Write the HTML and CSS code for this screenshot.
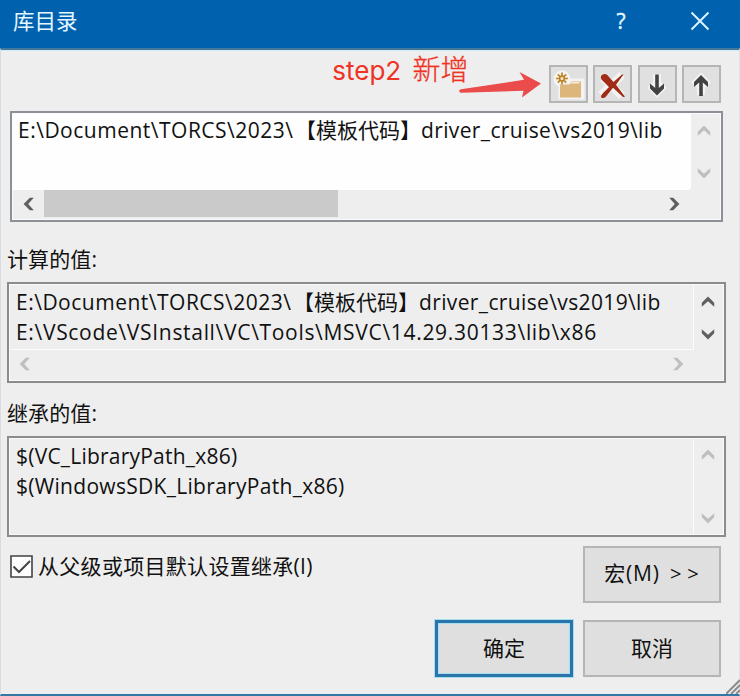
FILE: index.html
```html
<!DOCTYPE html>
<html lang="zh-CN">
<head>
<meta charset="utf-8">
<title>库目录</title>
<link rel="stylesheet" href="styles.css">
</head>
<body>
<svg width="0" height="0" class="defs">
  <symbol id="chev" viewBox="0 0 14 12"><path d="M.8 7.800 7 1.600l6.200 6.200v4L7 6.200.8 11.800z"/></symbol>
</svg>
<div class="dialog">
  <header class="titlebar">
    <h1>库目录</h1>
    <span class="help">?</span>
    <svg class="close" width="20" height="20" viewBox="0 0 20 20"><path d="M1.500 1.500l17 17M18.500 1.500l-17 17"/></svg>
  </header>
  <main class="body">
    <div class="toolbar">
      <span class="note">step2 <span>新增</span></span>
      <svg class="arrow" width="84" height="27" viewBox="0 0 84 27"><path d="M3 17.200 66 7.800 61.500 0 83 11.500 64 25.500 65.500 18.800 4 20.800C.5 21 .5 17.500 3 17.200z"/></svg>
      <button class="tool"><svg width="35" height="33" viewBox="0 0 35 33">
        <path class="halo" d="M9 15h9l2-3h12v18H9z"/><circle class="halo" cx="11" cy="11" r="7"/>
        <path fill="#dcb67a" d="M9 16.500h9.500l2-3H30V29.500H9z"/><path d="M20 14.800h8.500" stroke="#f7ead4" stroke-width="1.500"/>
        <g stroke="#bf8428" stroke-width="1.700"><path d="M11 4.500v12M5 10.500h12M6.800 6.300l8.400 8.400M15.200 6.300l-8.400 8.400"/><circle cx="11" cy="10.500" r="2.400" fill="#f8ead2"/></g>
      </svg></button>
      <button class="tool"><svg width="35" height="33" viewBox="0 0 35 33">
        <path class="halo thick" d="M8 10 27 28M27 7 6 27"/>
        <path fill="#a02b16" d="M7 7c3-2 5-1 7 2l4.500 5L27 6.500h1.500L21 16.800l9 12-2 .2-10-9.200-7 8.700c-2 2-5 2-5 0s5-6 8-9.500L6.500 11.500c-1-2-.8-3.500.5-4.500z"/>
      </svg></button>
      <button class="tool"><svg width="35" height="33" viewBox="0 0 35 33">
        <path class="halo thick" d="M17 6v19M10 17l7 7 7-7"/><path fill="#424242" d="M15.200 6.500h3.600V20l5.200-4.500v5L17 27.500l-7-7v-5l5.200 4.500z"/>
      </svg></button>
      <button class="tool"><svg width="35" height="33" viewBox="0 0 35 33">
        <path class="halo thick" d="M17 27V9M10 17l7-7 7 7"/><path fill="#424242" d="M15.200 28h3.600V14.500L24 19v-5L17 7l-7 7v5l5.200-4.500z"/>
      </svg></button>
    </div>

    <section class="list edit">
      <div class="text"><p><span class="p1">E:\Document\TORCS\2023\</span><span class="p2">【模板代码】</span><span class="p3">driver_cruise\vs2019\lib</span></p></div>
      <div class="vbar off"><svg class="up"><use href="#chev"/></svg><svg class="down"><use href="#chev"/></svg></div>
      <div class="hbar"><svg class="left"><use href="#chev"/></svg><i class="thumb"></i><svg class="right"><use href="#chev"/></svg></div>
      <div class="corner"></div>
    </section>

    <h2>计算的值:</h2>
    <section class="list computed">
      <div class="text"><p><span class="p1">E:\Document\TORCS\2023\</span><span class="p2">【模板代码】</span><span class="p3">driver_cruise\vs2019\lib</span></p><p class="l2">E:\VScode\VSInstall\VC\Tools\MSVC\14.29.30133\lib\x86</p></div>
      <div class="vbar"><svg class="up"><use href="#chev"/></svg><svg class="down"><use href="#chev"/></svg></div>
      <div class="hbar off"><svg class="left"><use href="#chev"/></svg><svg class="right"><use href="#chev"/></svg></div>
      <div class="corner"></div>
    </section>

    <h2 class="second">继承的值:</h2>
    <section class="list inherited">
      <div class="text"><p class="l3">$(VC_LibraryPath_x86)</p><p class="l4">$(WindowsSDK_LibraryPath_x86)</p></div>
      <div class="vbar off"><svg class="up"><use href="#chev"/></svg><svg class="down"><use href="#chev"/></svg></div>
    </section>

    <div class="options">
      <label class="check"><svg width="23" height="23" viewBox="0 0 23 23"><path fill="#fdfdfd" stroke="#414141" stroke-width="1.600" d="M1 1h21v21H1z"/><path fill="none" stroke="#444" stroke-width="2" d="M3.500 11.500 9 17 20 6"/></svg><span>从父级或项目默认设置继承(I)</span></label>
      <button class="btn macro">宏(M) <span>&gt;&gt;</span></button>
    </div>
    <footer class="actions">
      <button class="btn ok">确定</button>
      <button class="btn">取消</button>
    </footer>
    <svg class="grip" width="14" height="15" viewBox="0 0 14 15"><path d="M0 15 14 1M5 15l9-9M10 15l4-4"/></svg>
  </main>
</div>
</body>
</html>
```
FILE: styles.css
```css
* { box-sizing: border-box; }
body { margin: 0; }
body, button { font: 21px/30px "Open Sans", "Noto Sans CJK SC", sans-serif; color: #111; }
h1, h2, p { margin: 0; font-weight: 400; }
svg { display: block; flex: none; }
.defs { position: absolute; }
.dialog { width: 740px; height: 696px; display: flex; flex-direction: column; background: #eee; }
.titlebar { height: 48px; background: #0062af; display: flex; align-items: center; color: #e4f6ff; padding: 0 30px 6px 13px; }
h1 { flex: 1; font-size: 21.500px; line-height: 30px; }
.help { width: 20px; margin-right: 59px; text-align: center; -webkit-text-stroke: .4px; }
.close { fill: none; stroke: #d9f3ff; stroke-width: 2; }
.body { position: relative; flex: 1; border: solid; border-width: 2px 1px 2px; border-color: #43789a #e1e1e6 #3478a5 #d8dce4; box-shadow: inset 0 1px #d3edf6; padding: 0 18px 0 6px; }
.toolbar { display: flex; gap: 5.300px; height: 61px; padding-top: 15px; justify-content: flex-end; }
.note { font: 26px/30px Inter, "Noto Sans CJK SC", sans-serif; color: #ee3325; margin: -10px -16px 0 0; white-space: nowrap; }
.note span { font-size: 28px; margin-left: 4px; font-weight: 300; -webkit-text-stroke: .3px; }
.arrow { fill: #ea4b4b; margin: 7px 2px 0 0; }
.tool { width: 39px; height: 38px; padding: 0; border: 2px solid #b5b5b5; background: #e0e0e0; }
.halo { fill: #f3f3f3; stroke: #f3f3f3; stroke-width: 3; }
.halo.thick { fill: none; stroke-width: 8; }
.list { display: grid; width: 719px; border: 2px solid #8b8b8b; box-shadow: inset 0 0 0 1px #fafafa; padding: 1px; }
.text { white-space: nowrap; overflow: hidden; padding: 2px 0 0 6px; }
.text p { height: 30px; }
.text span { display: inline-block; }
.p1 { width: 277px; letter-spacing: .5px; }
.p3 { letter-spacing: .37px; }
.l2 { letter-spacing: .69px; }
.l3 { letter-spacing: .22px; }
.l4 { letter-spacing: .3px; }
.edit { width: 713px; height: 111px; margin-left: 3px; border-color: #8c9097; grid-template: 76px 29px / 678px 29px; }
.edit .text { background: #fefefe; padding: 1px 0 0 5px; border-radius: 0 0 3px; }
.computed { height: 101px; grid-template: 65px 30px / 684px 29px; }
.inherited { height: 101px; grid-template: 95px / 684px 29px; }
.computed .text, .inherited .text { border-right: 1px solid #fcfcfc; }
.computed .text { border-bottom: 1px solid #fcfcfc; }
.vbar { display: flex; flex-direction: column; justify-content: space-between; align-items: center; padding: 10px 3px 10px 0; }
.computed .vbar { padding: 10px 2px 9px 0; }
.inherited .vbar { padding: 9px 2px 9px 0; }
.hbar { display: flex; justify-content: space-between; align-items: center; padding: 0 9px 2px 8px; }
.computed .hbar { padding: 0 8px 2px 7px; }
.hbar .thumb { width: 294px; height: 27px; margin-left: 9px; margin-right: auto; background: #cacaca; }
.list svg { width: 14px; height: 12px; fill: #606060; }
.off svg { fill: #bfbfbf !important; }
.down { transform: rotate(180deg); }
.left { transform: rotate(-90deg); }
.right { transform: rotate(90deg); }
h2 { font-size: 21px; line-height: 30px; margin: 22px 0 8px; letter-spacing: .1px; }
h2.second { margin: 15px 0 8px; }
.options { display: flex; justify-content: space-between; margin: 9px 0 0 3px; }
.check { display: flex; gap: 5px; height: 31px; padding-top: 9px; white-space: nowrap; }
.check span { margin-top: -4px; letter-spacing: .3px; }
.btn { width: 138px; height: 57px; border: 2px solid #b5b5b5; background: #dfdfdf; padding: 0 0 2px; }
.macro { letter-spacing: .8px; }
.btn span { letter-spacing: 6px; font-size: 20px; margin: 0 -5px 0 4px; }
.actions { display: flex; gap: 10px; justify-content: flex-end; margin: 17px 0 0; }
.ok { border: 3px solid #2c73aa; box-shadow: inset 0 0 0 1px #a3def1, 0 0 0 1px #a3def1; }
.grip { position: absolute; right: -1px; bottom: 0; stroke: #8b8b8b; stroke-width: 2; }
```
